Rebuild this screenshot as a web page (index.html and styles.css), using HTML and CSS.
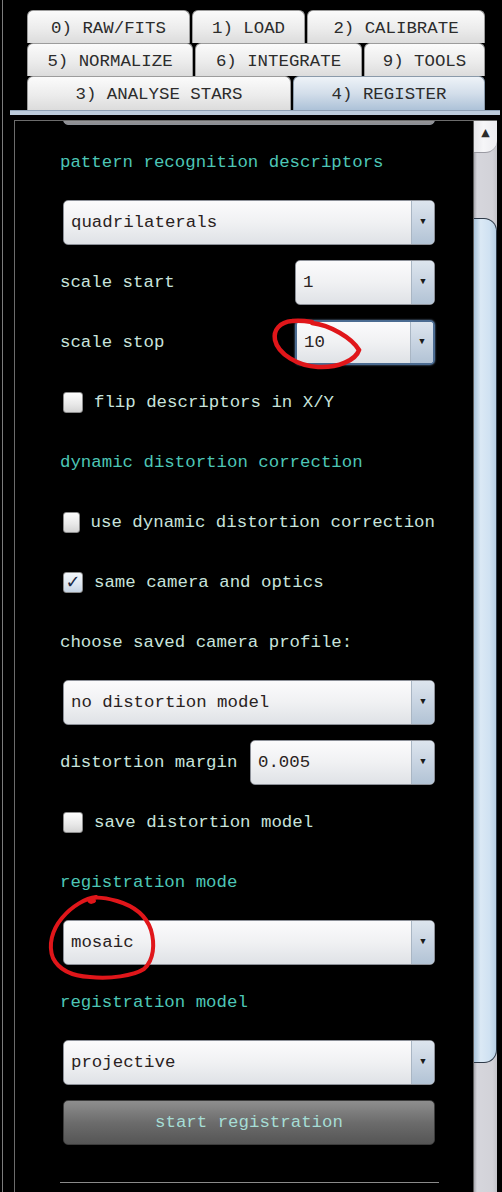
FILE: index.html
```html
<!DOCTYPE html>
<html>
<head>
<meta charset="utf-8">
<link rel="stylesheet" href="styles.css">
</head>
<body>
<div class="window">
  <div class="tabs">
    <div class="tab-row">
      <div class="tab t-raw">0) RAW/FITS</div>
      <div class="tab t-load">1) LOAD</div>
      <div class="tab t-cal">2) CALIBRATE</div>
    </div>
    <div class="tab-row">
      <div class="tab t-norm">5) NORMALIZE</div>
      <div class="tab t-int">6) INTEGRATE</div>
      <div class="tab t-tools">9) TOOLS</div>
    </div>
    <div class="tab-row last">
      <div class="tab t-stars">3) ANALYSE STARS</div>
      <div class="tab t-reg active">4) REGISTER</div>
    </div>
  </div>
  <div class="tab-bar"></div>
  <div class="frame">
    <div class="content">
      <div class="row first">
        <div class="select full clipped"></div>
      </div>
      <div class="row"><span class="heading">pattern recognition descriptors</span></div>
      <div class="row">
        <div class="select full"><span class="val">quadrilaterals</span><span class="arrow">▼</span></div>
      </div>
      <div class="row split">
        <span class="label">scale start</span>
        <div class="select small"><span class="val">1</span><span class="arrow">▼</span></div>
      </div>
      <div class="row split">
        <span class="label">scale stop</span>
        <div class="select small focus"><span class="val">10</span><span class="arrow">▼</span></div>
      </div>
      <div class="row">
        <span class="check"></span><span class="label">flip descriptors in X/Y</span>
      </div>
      <div class="row"><span class="heading">dynamic distortion correction</span></div>
      <div class="row">
        <span class="check"></span><span class="label">use dynamic distortion correction</span>
      </div>
      <div class="row">
        <span class="check checked">✓</span><span class="label">same camera and optics</span>
      </div>
      <div class="row"><span class="label">choose saved camera profile:</span></div>
      <div class="row">
        <div class="select full"><span class="val">no distortion model</span><span class="arrow">▼</span></div>
      </div>
      <div class="row split">
        <span class="label">distortion margin</span>
        <div class="select medium"><span class="val">0.005</span><span class="arrow">▼</span></div>
      </div>
      <div class="row">
        <span class="check"></span><span class="label">save distortion model</span>
      </div>
      <div class="row"><span class="heading">registration mode</span></div>
      <div class="row">
        <div class="select full"><span class="val">mosaic</span><span class="arrow">▼</span></div>
      </div>
      <div class="row"><span class="heading">registration model</span></div>
      <div class="row">
        <div class="select full"><span class="val">projective</span><span class="arrow">▼</span></div>
      </div>
      <div class="row">
        <div class="button">start registration</div>
      </div>
      <div class="row"><div class="rule"></div></div>
    </div>
    <div class="scrollbar">
      <div class="sb-up">▲</div>
      <div class="sb-thumb"></div>
    </div>
  </div>
</div>
<svg class="annot" width="502" height="1192" viewBox="0 0 502 1192">
  <path d="M312 323 C330 325 352 338 359 350 C356 360 338 368 318 367 C298 366 278 354 275 340 C273 330 280 322 292 321 C300 320 306 321 312 322" fill="none" stroke="#e0161a" stroke-width="4.5" stroke-linecap="round"/>
  <path d="M96 897 C86 898 72 906 62 918 C52 930 48 945 53 958 C59 970 72 976 90 977 C110 979 133 976 144 969 C154 960 155 944 151 930 C146 915 134 906 117 901 C106 898 96 896 91 899 C88 901 90 903 94 901" fill="none" stroke="#e0161a" stroke-width="4" stroke-linecap="round"/>
</svg>
</body>
</html>
```

FILE: styles.css
```css
* {
  box-sizing: border-box;
}

body {
  margin: 0;
  background: #000;
  width: 502px;
  height: 1192px;
  overflow: hidden;
  position: relative;
  font-family: "Courier New", "Liberation Mono", monospace;
  font-size: 17.4px;
}

.window {
  margin-left: 2px;
  border-left: 1px solid #7c7c7c;
  height: 1192px;
}

.tabs {
  padding: 10px 0 0 24px;
  width: 482px;
}

.tab-row {
  display: flex;
  gap: 2px;
  height: 33px;
}

.tab-row.last {
  height: 34px;
}

.tab {
  display: flex;
  align-items: center;
  justify-content: center;
  padding-top: 2px;
  white-space: pre;
  color: #2c2c2c;
  border: 1px solid #9c9c9c;
  border-bottom: none;
  border-radius: 6px 6px 0 0;
  background: linear-gradient(#fbfbfb, #ececec 55%, #dcdcdc);
}

.tab.active {
  background: linear-gradient(#eef3f8, #d3deea 50%, #adc2d8);
  border-color: #8a9aaa;
}

.t-raw { width: 163px; }
.t-load { width: 113px; }
.t-cal { width: 178px; }
.t-norm { width: 166px; }
.t-int { width: 167px; }
.t-tools { width: 121px; }
.t-stars { width: 264px; }
.t-reg { width: 192px; }

.tab-bar {
  margin-left: 7px;
  width: 490px;
  height: 5px;
  background: #bccbdb;
  border-top: 1px solid #8ea0b4;
  margin-bottom: 5px;
}

.frame {
  margin-left: 11px;
  width: 483px;
  height: 1072px;
  display: flex;
  border-left: 1px solid #6c6c6c;
  border-top: 1px solid #6c6c6c;
}

.content {
  flex: 1;
  overflow: hidden;
  padding: 0 38px 0 45px;
}

.row {
  height: 60px;
  display: flex;
  align-items: center;
}

.row.first {
  margin-top: -49px;
}

.row.split {
  justify-content: space-between;
}

.heading {
  color: #4dc6b6;
  white-space: pre;
}

.label {
  color: #c8e3dc;
  white-space: pre;
}

.select {
  height: 45px;
  display: flex;
  align-items: stretch;
  border: 1px solid #8c9098;
  border-radius: 5px;
  overflow: hidden;
  background: linear-gradient(#fbfbfc, #f0f1f3 50%, #dfe2e6);
}

.select.clipped {
  background: linear-gradient(#e8e8ea, #b8b8bc 70%, #8c8c90);
}

.select.full {
  margin-left: 3px;
  width: 372px;
}

.select.small {
  width: 140px;
}

.select.medium {
  width: 185px;
}

.select.focus {
  border: 2px solid #4c6c92;
  box-shadow: 0 0 2px #7a9cc4;
}

.val {
  flex: 1;
  display: flex;
  align-items: center;
  padding-left: 7px;
  color: #2a2222;
  white-space: pre;
}

.arrow {
  width: 23px;
  display: flex;
  align-items: center;
  justify-content: center;
  font-size: 9px;
  color: #1a1a1a;
  border-left: 1px solid #a9b6c4;
  background: linear-gradient(#dde5ee, #c8d4e2 50%, #b2c3d5);
}

.check {
  width: 20px;
  height: 21px;
  margin: 0 11px 0 3px;
  border: 1px solid #8c8c8c;
  border-radius: 3px;
  background: linear-gradient(#fdfdfd, #e8e8e8 60%, #d4d4d4);
  display: flex;
  align-items: center;
  justify-content: center;
  font-family: "DejaVu Sans", sans-serif;
  font-size: 18px;
  font-weight: bold;
  color: #1c2a44;
  line-height: 1;
}

.check.checked {
  background: linear-gradient(#f4f8fc, #dde6f0 60%, #c6d4e4);
}

.button {
  margin-left: 3px;
  width: 372px;
  height: 45px;
  display: flex;
  align-items: center;
  justify-content: center;
  border: 1px solid #3c3c3c;
  border-radius: 5px;
  background: linear-gradient(#8e8e8e, #6c6c6c 50%, #555555);
  color: #a6ddd5;
  white-space: pre;
}

.rule {
  width: 379px;
  height: 1px;
  background: #8a8a8a;
  margin-right: -4px;
}

.scrollbar {
  width: 24px;
  border-left: 1px solid #5a5a5a;
  background: linear-gradient(to right, #a8a8b0, #d6d6dc 3px, #d2d2d8 80%, #c4c4ca);
}

.sb-up {
  height: 32px;
  display: flex;
  align-items: center;
  justify-content: center;
  padding-bottom: 8px;
  font-family: "DejaVu Sans", sans-serif;
  font-size: 11px;
  color: #2a2a2a;
  background: linear-gradient(to right, #e6e6ea, #f6f6f8 40%, #ececf0);
  border-bottom-right-radius: 12px;
  border-bottom: 1px solid #9a9aa2;
}

.sb-thumb {
  margin-top: 65px;
  height: 845px;
  border: 1px solid #2e3a48;
  border-left: none;
  border-radius: 0 13px 13px 0;
  background: linear-gradient(to right, #a9c3da, #dbe9f5 30%, #d0e2f2 70%, #b7cfe4);
}

.annot {
  position: absolute;
  left: 0;
  top: 0;
  pointer-events: none;
}
```
